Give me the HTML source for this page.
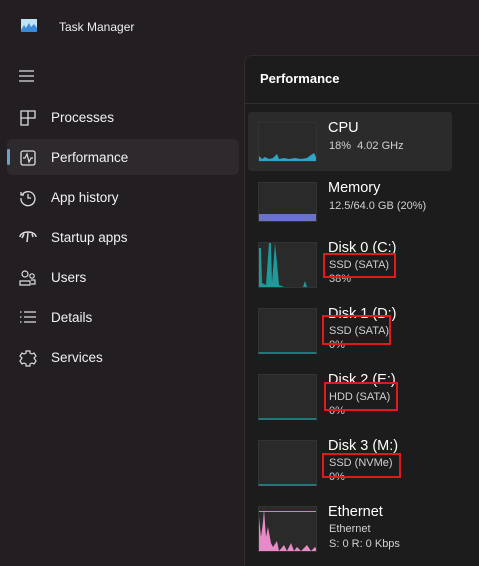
<!DOCTYPE html><html><head><style>
body{margin:0;width:479px;height:556px;background:#231e22;font-family:"Liberation Sans","Segoe UI",sans-serif;color:#fff;position:relative;overflow:hidden}
.a{position:absolute}
.nav{position:absolute;left:51px;font-size:13.5px;color:#f2f2f2}
.ic{position:absolute;left:19px;width:18px;height:18px}
.panel{position:absolute;left:244px;top:55px;width:240px;height:510px;background:#1c1c1c;border-top-left-radius:8px;border-top:1px solid #2e2a2d;border-left:1px solid #2e2a2d}
.g{position:absolute;left:258px;width:59px;background:#2a2a2a;border:1px solid #333;box-sizing:border-box;overflow:hidden}
.t{position:absolute;left:328px;font-size:14.5px;color:#fff}
.s{position:absolute;left:329px;font-size:11px;color:#d0d0d0}
.r{position:absolute;border:2px solid #e01a1a;box-sizing:border-box}
</style></head><body>
<div class="a" style="left:21px;top:19px;width:16px;height:11px;background:#bfe3f5"><svg width="16" height="11"><path d="M0 9 L3 4 L5 7 L8 2 L10 6 L13 3 L16 7 L16 11 L0 11Z" fill="#3a8ad8"/></svg></div>
<div class="a" style="left:59px;top:20px;font-size:12px;color:#eee">Task Manager</div>
<svg class="a" style="left:19px;top:70px" width="16" height="12"><path d="M0 1H15M0 6H15M0 11H15" stroke="#ddd" stroke-width="1.2"/></svg>
<div class="a" style="left:7px;top:139px;width:232px;height:36px;background:#2e292d;border-radius:5px"></div>
<div class="a" style="left:7px;top:149px;width:3px;height:16px;background:#6aa3c8;border-radius:2px"></div>
<svg class="ic" style="top:109px" viewBox="0 0 18 18"><path d="M2 2H9V16H2ZM9 2H16V9H9ZM2 9H9" fill="none" stroke="#ddd" stroke-width="1.3"/></svg>
<div class="nav" style="top:110px">Processes</div>
<svg class="ic" style="top:149px" viewBox="0 0 18 18"><rect x="2" y="2" width="14" height="14" rx="2" fill="none" stroke="#ddd" stroke-width="1.3"/><path d="M4 9H6L8 5L10 13L12 9H14" fill="none" stroke="#ddd" stroke-width="1.2"/></svg>
<div class="nav" style="top:150px">Performance</div>
<svg class="ic" style="top:189px" viewBox="0 0 18 18"><path d="M3 6A7 7 0 1 1 2 9M2 3V6H5M9 5V9H12" fill="none" stroke="#ddd" stroke-width="1.3"/></svg>
<div class="nav" style="top:190px">App history</div>
<svg class="ic" style="top:229px" viewBox="0 0 18 18"><path d="M1 8A8 5 0 0 1 17 8M9 4L8 13M5 5L3 9M13 5L14 8" fill="none" stroke="#ddd" stroke-width="1.5"/></svg>
<div class="nav" style="top:230px">Startup apps</div>
<svg class="ic" style="top:269px" viewBox="0 0 18 18"><circle cx="6" cy="5" r="3" fill="none" stroke="#ddd" stroke-width="1.2"/><circle cx="13" cy="7" r="2.2" fill="none" stroke="#ddd" stroke-width="1.2"/><path d="M1 16V12H11V16ZM12 11H16V15H12" fill="none" stroke="#ddd" stroke-width="1.2"/></svg>
<div class="nav" style="top:270px">Users</div>
<svg class="ic" style="top:309px" viewBox="0 0 18 18"><path d="M1 3H2.5M1 8H2.5M1 13H2.5M5 3H17M5 8H17M5 13H17" stroke="#ddd" stroke-width="1.3"/></svg>
<div class="nav" style="top:310px">Details</div>
<svg class="ic" style="top:349px" viewBox="0 0 18 18"><path d="M7 2H11V4L13 5L15 4L17 7L15 9L17 12L15 15L13 14L11 15V17H7V15L5 14L3 15L1 12L3 9L1 7L3 4L5 5L7 4Z" fill="none" stroke="#ddd" stroke-width="1.2"/></svg>
<div class="nav" style="top:350px">Services</div>

<div class="panel"></div>
<div class="a" style="left:260px;top:71px;font-size:13px;font-weight:bold">Performance</div>
<div class="a" style="left:244px;top:103px;width:235px;height:1px;background:#2f2f2f"></div>
<div class="a" style="left:248px;top:112px;width:204px;height:59px;background:#2b2b2b;border-radius:3px"></div>

<div class="g" style="top:122px;height:40px"><svg width="59" height="40"><path d="M0 40V33L3 36L6 34L10 36L14 35L18 31L20 36L25 35L30 36L36 35L42 36L48 35L52 32L55 30L58 36V40Z" fill="#2fa6c8"/></svg></div>
<div class="t" style="top:120px">CPU</div><div class="s" style="top:140px">18%&nbsp; 4.02 GHz</div>

<div class="g" style="top:182px;height:40px"><div class="a" style="left:0;bottom:0;width:59px;height:7px;background:#6a72cc"></div></div>
<div class="t" style="top:180px">Memory</div><div class="s" style="top:200px">12.5/64.0 GB (20%)</div>

<div class="g" style="top:242px;height:46px"><svg width="59" height="46"><path d="M0 46V5L2 5L3 40L7 42L10 0L12 0L13 40L16 0L18 20L20 42L25 44L44 44L46 38L48 44L56 44V46Z" fill="#1e9a9a"/></svg></div>
<div class="t" style="top:240px">Disk 0 (C:)</div><div class="s" style="top:259px">SSD (SATA)</div><div class="s" style="top:273px">38%</div>
<div class="r" style="left:323px;top:253px;width:73px;height:25px"></div>

<div class="g" style="top:308px;height:46px;border-bottom:2px solid #1e7a7a"></div>
<div class="t" style="top:306px">Disk 1 (D:)</div><div class="s" style="top:325px">SSD (SATA)</div><div class="s" style="top:339px">0%</div>
<div class="r" style="left:322px;top:315px;width:69px;height:30px"></div>

<div class="g" style="top:374px;height:46px;border-bottom:2px solid #1e7a7a"></div>
<div class="t" style="top:372px">Disk 2 (E:)</div><div class="s" style="top:391px">HDD (SATA)</div><div class="s" style="top:405px">0%</div>
<div class="r" style="left:324px;top:382px;width:74px;height:29px"></div>

<div class="g" style="top:440px;height:46px;border-bottom:2px solid #1e7a7a"></div>
<div class="t" style="top:438px">Disk 3 (M:)</div><div class="s" style="top:457px">SSD (NVMe)</div><div class="s" style="top:471px">0%</div>
<div class="r" style="left:322px;top:453px;width:79px;height:25px"></div>

<div class="g" style="top:506px;height:46px"><div class="a" style="left:0;top:4px;width:59px;height:1px;background:#e07ac0"></div><svg width="59" height="46"><path d="M0 46V10L2 30L4 15L5 2L7 30L9 20L12 36L14 40L18 34L20 44L25 38L28 44L32 36L35 44L38 40L42 44L48 38L52 44L56 40L59 44V46Z" fill="#e88ac8"/></svg></div>
<div class="t" style="top:504px">Ethernet</div><div class="s" style="top:523px">Ethernet</div><div class="s" style="top:538px">S: 0 R: 0 Kbps</div>
</body></html>
